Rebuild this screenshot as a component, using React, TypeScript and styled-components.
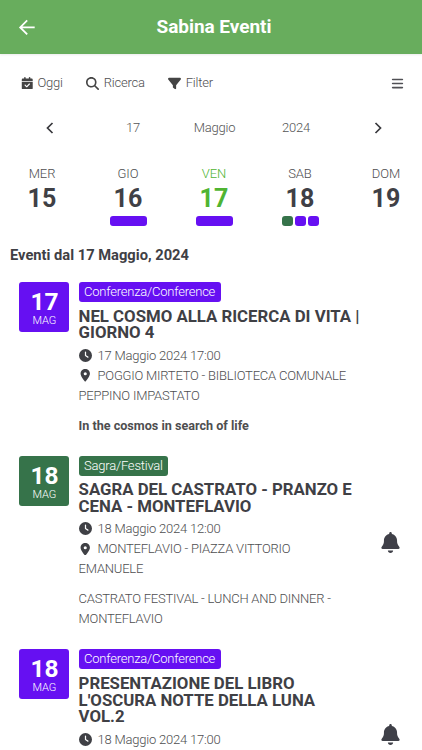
import React from "react";
import styled, { createGlobalStyle } from "styled-components";
import {
  FaCalendarCheck,
  FaMagnifyingGlass,
  FaFilter,
  FaBars,
  FaClock,
  FaLocationDot,
  FaBell,
} from "react-icons/fa6";

const PURPLE = "#6610f2";
const GREEN = "#36734a";

const GlobalStyle = createGlobalStyle`
  * { box-sizing: border-box; }
  body {
    margin: 0;
    background: #fff;
    overflow: hidden;
    font-family: Roboto, "Liberation Sans", sans-serif;
    font-weight: 300;
    font-size: 13px;
    letter-spacing: -0.22px;
    color: #4e4e50;
  }
`;

const Screen = styled.div`
  width: 422px;
  height: 750px;
  overflow: hidden;
  background: #fff;
`;

const Header = styled.header`
  display: grid;
  grid-template-columns: 40px 1fr 34px;
  align-items: center;
  height: 54px;
  padding: 0 0 0 17px;
  background: #68ad5d;
  color: #fff;
  box-shadow: 0 1px 2px rgba(0, 0, 0, 0.08);
`;

const HeaderTitle = styled.h1`
  margin: 0;
  padding: 0 17px 0 0;
  text-align: center;
  font-size: 19px;
  font-weight: 700;
  line-height: 54px;
  letter-spacing: -0.05px;
`;

const Toolbar = styled.nav`
  display: flex;
  align-items: center;
  height: 26px;
  margin-top: 16px;
  padding: 0 18px 0 21px;
`;

const Tool = styled.div<{ $gap: number; $after: number }>`
  display: flex;
  align-items: center;
  gap: ${(p) => p.$gap}px;
  margin-right: ${(p) => p.$after}px;
  line-height: 26px;
  svg { color: #444; }
`;

const MenuButton = styled.div`
  display: flex;
  margin-left: auto;
  color: #505055;
`;

const DateNav = styled.div`
  display: grid;
  grid-template-columns: 100px 66px 97px 66px 1fr;
  align-items: center;
  justify-items: center;
  height: 26px;
  margin-top: 19px;
  padding-right: 1px;
  line-height: 26px;
  color: #555;
  svg:last-child { margin-left: 6px; }
`;

const Days = styled.div`
  display: grid;
  grid-template-columns: repeat(5, 86px);
  height: 64px;
  margin: 26px 0 0 -1px;
`;

const Day = styled.div<{ $active?: boolean }>`
  display: flex;
  flex-direction: column;
  align-items: center;
  color: ${(p) => (p.$active ? "#4fb432" : "inherit")};
`;

const DayName = styled.span`
  line-height: 14px;
  letter-spacing: -0.1px;
`;

const DayNumber = styled.span<{ $active?: boolean }>`
  margin-top: 3px;
  font-size: 25px;
  font-weight: 700;
  line-height: 30px;
  letter-spacing: 0.2px;
  color: ${(p) => (p.$active ? "inherit" : "#3f4045")};
`;

const Marks = styled.div`
  display: flex;
  gap: 1.5px;
  width: 37px;
  height: 10px;
  margin: 2.4px 0 0 1px;
`;

const Mark = styled.i<{ $color: string }>`
  flex: 1;
  border-radius: 3px;
  background: ${(p) => p.$color};
`;

const ListHeading = styled.h2`
  margin: 14px 0 17px 10px;
  font-size: 14.7px;
  font-weight: 700;
  line-height: 20px;
  letter-spacing: 0;
  color: #3f4045;
`;

const Event = styled.article`
  display: grid;
  grid-template-columns: 50px 290px 1fr;
  column-gap: 9.2px;
  margin-bottom: 19.8px;
  padding-left: 19.4px;
`;

const DateBadge = styled.div<{ $color: string }>`
  display: flex;
  flex-direction: column;
  align-items: center;
  width: 50px;
  height: 50px;
  padding-top: 6px;
  border-radius: 3px;
  background: ${(p) => p.$color};
  color: #fff;
`;

const BadgeNumber = styled.span`
  font-size: 24.5px;
  font-weight: 700;
  line-height: 27px;
`;

const BadgeMonth = styled.span`
  font-size: 11px;
  line-height: 11px;
  letter-spacing: -0.1px;
`;

const Details = styled.div`
  display: flex;
  flex-direction: column;
  align-items: flex-start;
`;

const Tag = styled.span<{ $color: string }>`
  height: 20px;
  padding: 0 5.5px;
  border-radius: 3px;
  background: ${(p) => p.$color};
  color: #fff;
  line-height: 20px;
  white-space: nowrap;
`;

const Title = styled.h3`
  margin: 5.8px 0 4.8px;
  font-size: 16.8px;
  font-weight: 700;
  line-height: 16.6px;
  letter-spacing: 0;
  color: #3f4045;
  white-space: nowrap;
`;

const Line = styled.div`
  line-height: 20px;
  white-space: nowrap;
`;

const InlineIcon = styled.span`
  display: inline-flex;
  justify-content: center;
  width: 13px;
  margin-right: 6px;
  vertical-align: -2px;
  color: #3f4045;
`;

const Description = styled.p<{ $bold?: boolean }>`
  margin: 10px 0 0;
  font-size: ${(p) => (p.$bold ? 12.6 : 13)}px;
  font-weight: ${(p) => (p.$bold ? 700 : 300)};
  letter-spacing: ${(p) => (p.$bold ? 0 : -0.22)}px;
  line-height: 20px;
  white-space: nowrap;
`;

const Reminder = styled.div`
  display: flex;
  align-items: center;
  justify-content: center;
  padding-right: 19px;
  color: #3f4048;
`;

type Chevron = "left" | "right";

const ChevronIcon = ({ to }: { to: Chevron }) => (
  <svg width="12" height="14" viewBox="0 0 12 14" fill="none" stroke="#38383c" strokeWidth="1.7">
    <path d={to === "left" ? "M8.5 2 3.5 7l5 5" : "M3.5 2l5 5-5 5"} />
  </svg>
);

const BackIcon = () => (
  <svg width="20" height="20" viewBox="0 0 20 20" fill="none" stroke="#fff" strokeWidth="1.8">
    <path d="M17.7 10.4H3.7M10.2 3.4l-7 7 7 7" />
  </svg>
);

const days = [
  { name: "MER", number: 15, marks: [] },
  { name: "GIO", number: 16, marks: [PURPLE] },
  { name: "VEN", number: 17, marks: [PURPLE], active: true },
  { name: "SAB", number: 18, marks: [GREEN, PURPLE, PURPLE] },
  { name: "DOM", number: 19, marks: [] },
];

const events = [
  {
    day: 17,
    color: PURPLE,
    tag: "Conferenza/Conference",
    title: ["NEL COSMO ALLA RICERCA DI VITA |", "GIORNO 4"],
    time: "17 Maggio 2024 17:00",
    place: ["POGGIO MIRTETO - BIBLIOTECA COMUNALE", "PEPPINO IMPASTATO"],
    description: ["In the cosmos in search of life"],
    bold: true,
    reminder: false,
  },
  {
    day: 18,
    color: GREEN,
    tag: "Sagra/Festival",
    title: ["SAGRA DEL CASTRATO - PRANZO E", "CENA - MONTEFLAVIO"],
    time: "18 Maggio 2024 12:00",
    place: ["MONTEFLAVIO - PIAZZA VITTORIO", "EMANUELE"],
    description: ["CASTRATO FESTIVAL - LUNCH AND DINNER -", "MONTEFLAVIO"],
    bold: false,
    reminder: true,
  },
  {
    day: 18,
    color: PURPLE,
    tag: "Conferenza/Conference",
    title: ["PRESENTAZIONE DEL LIBRO", "L'OSCURA NOTTE DELLA LUNA", "VOL.2"],
    time: "18 Maggio 2024 17:00",
    place: ["\u00a0", "\u00a0"],
    description: ["\u00a0"],
    bold: false,
    reminder: true,
  },
];

const Lines = ({ items }: { items: string[] }) => (
  <>
    {items.map((text, i) => (
      <React.Fragment key={i}>
        {i > 0 && <br />}
        {text}
      </React.Fragment>
    ))}
  </>
);

export default function App() {
  return (
    <Screen>
      <GlobalStyle />
      <Header>
        <BackIcon />
        <HeaderTitle>Sabina Eventi</HeaderTitle>
      </Header>
      <Toolbar>
        <Tool $gap={4} $after={23}>
          <FaCalendarCheck size={12.5} />
          Oggi
        </Tool>
        <Tool $gap={5} $after={23.5}>
          <FaMagnifyingGlass size={13} />
          Ricerca
        </Tool>
        <Tool $gap={4.5} $after={0}>
          <FaFilter size={13} />
          Filter
        </Tool>
        <MenuButton>
          <FaBars size={13} />
        </MenuButton>
      </Toolbar>
      <DateNav>
        <ChevronIcon to="left" />
        <span>17</span>
        <span>Maggio</span>
        <span>2024</span>
        <ChevronIcon to="right" />
      </DateNav>
      <Days>
        {days.map((d) => (
          <Day key={d.number} $active={d.active}>
            <DayName>{d.name}</DayName>
            <DayNumber $active={d.active}>{d.number}</DayNumber>
            <Marks>
              {d.marks.map((color, i) => (
                <Mark key={i} $color={color} />
              ))}
            </Marks>
          </Day>
        ))}
      </Days>
      <ListHeading>Eventi dal 17 Maggio, 2024</ListHeading>
      {events.map((e) => (
        <Event key={e.title[0]}>
          <DateBadge $color={e.color}>
            <BadgeNumber>{e.day}</BadgeNumber>
            <BadgeMonth>MAG</BadgeMonth>
          </DateBadge>
          <Details>
            <Tag $color={e.color}>{e.tag}</Tag>
            <Title>
              <Lines items={e.title} />
            </Title>
            <Line>
              <InlineIcon>
                <FaClock size={13} />
              </InlineIcon>
              {e.time}
            </Line>
            <Line>
              <InlineIcon>
                <FaLocationDot size={12.5} />
              </InlineIcon>
              <Lines items={e.place} />
            </Line>
            <Description $bold={e.bold}>
              <Lines items={e.description} />
            </Description>
          </Details>
          {e.reminder && (
            <Reminder>
              <FaBell size={21} />
            </Reminder>
          )}
        </Event>
      ))}
    </Screen>
  );
}
